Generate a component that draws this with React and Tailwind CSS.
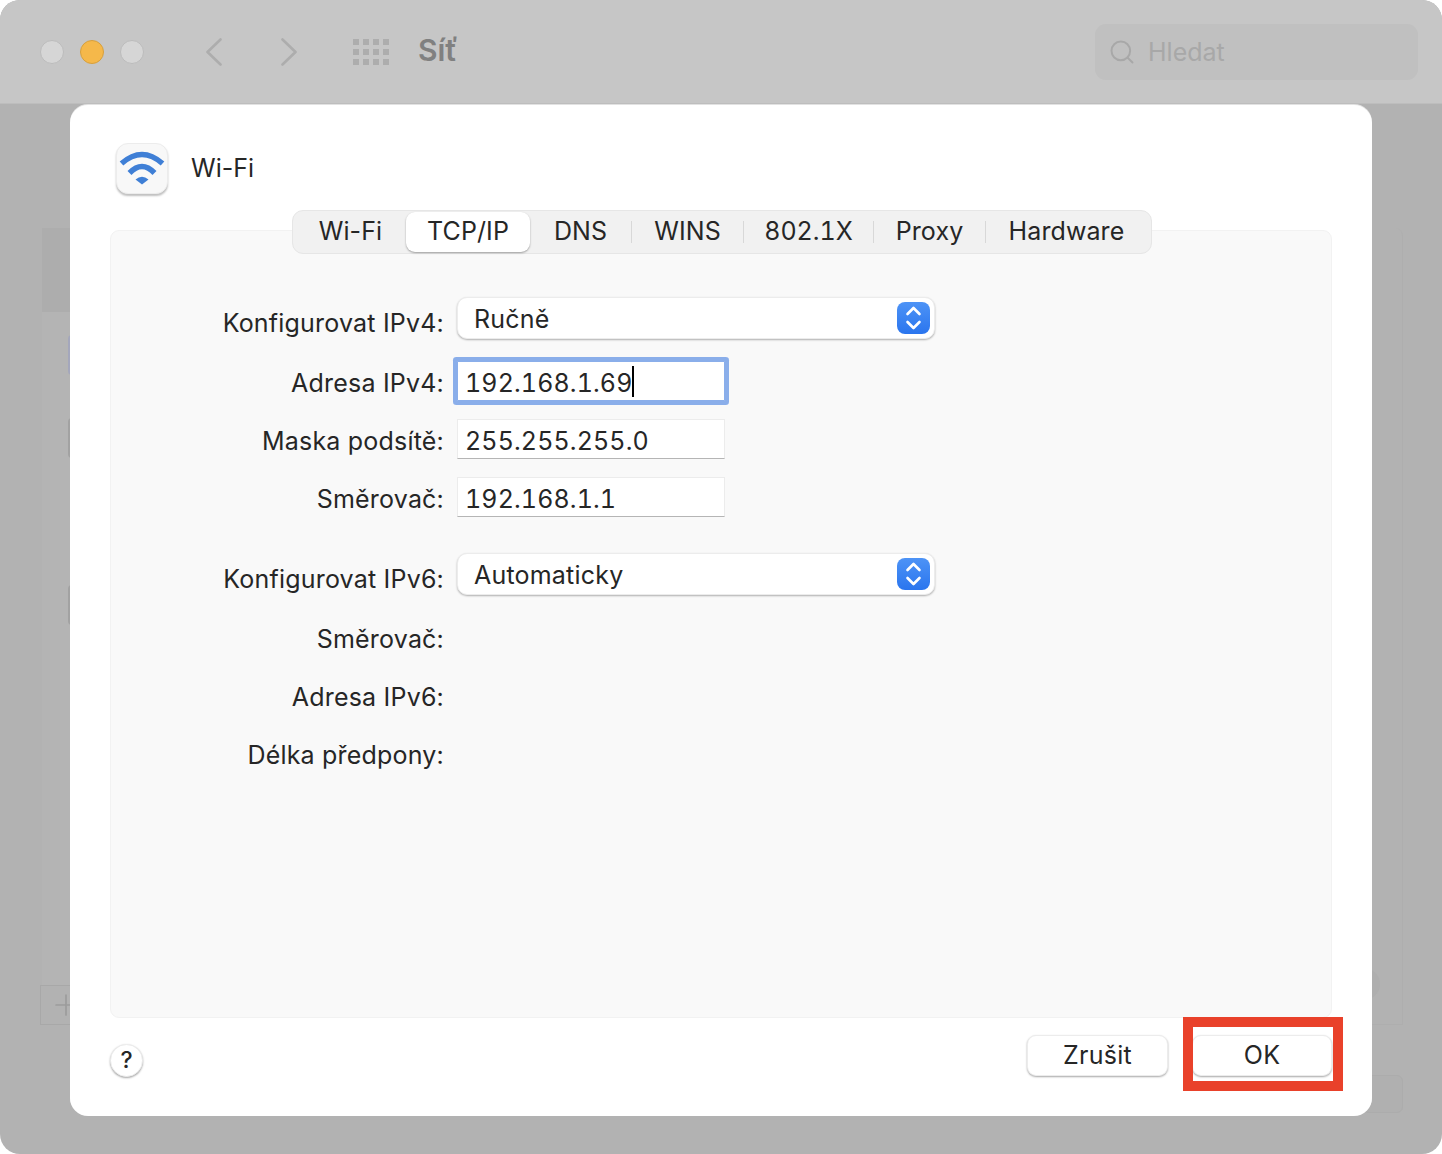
import React from 'react';
import { Search, Plus } from 'lucide-react';

const WifiIcon = () => (
  <div className="w-[52px] h-[51px] rounded-[12px] bg-[#f8f8f8] border border-[#ececec] shadow-[0_2px_2px_rgba(0,0,0,0.25)]">
    <svg width="50" height="49" viewBox="1 1 50 49">
      <path d="M5.5 20.5 Q26 2.5 46.5 20.5" fill="none" stroke="#3f7fd6" strokeWidth="5.5" />
      <path d="M13.5 30 Q26 17 38.5 30" fill="none" stroke="#3f7fd6" strokeWidth="5.5" />
      <path d="M19.5 36.5 Q26 31 32.5 36.5 L26 41.5 Z" fill="#3f7fd6" />
    </svg>
  </div>
);

const Stepper = () => (
  <div className="w-[33px] h-[32px] flex items-center justify-center rounded-[8px] bg-gradient-to-b from-[#4d93f6] to-[#2a75ee]">
    <svg width="17" height="26" viewBox="0 0 17 26" fill="none" stroke="white" strokeWidth="2.6" strokeLinecap="round" strokeLinejoin="round">
      <path d="M2.5 9 L8.5 3 L14.5 9" />
      <path d="M2.5 17 L8.5 23 L14.5 17" />
    </svg>
  </div>
);

const Tabs = () => (
  <div className="relative z-10 ml-[182px] w-[860px] h-[44px] flex items-center bg-[#f1f1f1] border border-[#e6e6e6] rounded-[11px] text-[25px] tracking-[0.1px] text-[#262626]">
    <div className="w-[113px] pl-[2px] text-center">Wi-Fi</div>
    <div className="w-[124px] h-[40px] flex items-center justify-center bg-white rounded-[9px] shadow-[0_1px_2px_rgba(0,0,0,0.35)]">TCP/IP</div>
    <div className="w-[101px] text-center">DNS</div>
    <div className="w-px h-[22px] bg-[#d8d8d8]" />
    <div className="w-[111px] text-center">WINS</div>
    <div className="w-px h-[22px] bg-[#d8d8d8]" />
    <div className="w-[129px] text-center tabular-nums tracking-normal">802.1X</div>
    <div className="w-px h-[22px] bg-[#d8d8d8]" />
    <div className="w-[111px] text-center">Proxy</div>
    <div className="w-px h-[22px] bg-[#d8d8d8]" />
    <div className="flex-1 pr-[4px] text-center">Hardware</div>
  </div>
);

const Label = ({ children, offset }) => (
  <div className={`w-[333px] shrink-0 text-right text-[25px] tracking-[0.2px] leading-[40px] text-[#262626] ${offset}`}>{children}</div>
);

const SelectRow = ({ label, value, className }) => (
  <div className={`flex gap-[13px] h-[42px] ${className}`}>
    <Label offset="pt-[6px]">{label}</Label>
    <div className="w-[478px] h-[42px] flex items-center justify-between pl-[16px] pr-[4px] bg-white rounded-[10px] border border-[#ececec] shadow-[0_1px_2px_rgba(0,0,0,0.3)] text-[25px] tracking-[0.2px] text-[#262626]">
      <span className="pt-[3px]">{value}</span>
      <Stepper />
    </div>
  </div>
);

const InputRow = ({ label, value, focused, className }) => (
  <div className={`flex gap-[13px] h-[40px] ${className}`}>
    <Label offset="pt-[2px]">{label}</Label>
    {focused ? (
      <div className="w-[268px] h-[40px] flex items-center pl-[7px] bg-white border border-[#8aaeea] rounded-[1px] ring-4 ring-[#8aaeea] text-[25px] tracking-[0.12px] tabular-nums text-[#262626]">
        <span className="pt-[6px]">{value}</span>
        <span className="w-[2px] h-[31px] bg-black" />
      </div>
    ) : (
      <div className="w-[268px] h-[40px] flex items-center pl-[7px] pt-[6px] bg-white border border-[#ececec] border-b-[#b5b5b5] text-[25px] tracking-[0.12px] tabular-nums text-[#262626]">
        {value}
      </div>
    )}
  </div>
);

const LabelRow = ({ label, className }) => (
  <div className={`flex h-[40px] ${className}`}>
    <Label offset="pt-[2px]">{label}</Label>
  </div>
);

const Button = ({ children, className }) => (
  <div className={`h-[41px] flex items-center justify-center bg-white rounded-[9px] border border-[#ececec] shadow-[0_1px_2px_rgba(0,0,0,0.35)] text-[25px] tracking-[0.3px] text-[#262626] ${className}`}>
    {children}
  </div>
);

export default function App() {
  return (
    <div className="relative w-[1442px] h-[1154px] overflow-hidden bg-white font-['Inter',sans-serif]">
      <div className="flex flex-col h-full rounded-[20px] overflow-hidden bg-[#b2b2b2]">
        {/* title bar */}
        <div className="h-[104px] shrink-0 flex items-center pl-[40px] pr-[24px] bg-[#c6c6c6] border-b border-[#bdbdbd]">
          <div className="flex gap-[16px]">
            <div className="w-[24px] h-[24px] rounded-full bg-[#d6d6d6] border border-[#bcbcbc]" />
            <div className="w-[24px] h-[24px] rounded-full bg-[#f5b84a] border border-[#d6a03e]" />
            <div className="w-[24px] h-[24px] rounded-full bg-[#d6d6d6] border border-[#bcbcbc]" />
          </div>
          <svg width="16" height="28" viewBox="0 0 16 28" fill="none" stroke="#adadad" strokeWidth="2.6" strokeLinecap="round" strokeLinejoin="round" className="ml-[62px]">
            <path d="M14.5 1.5 L1.5 14 L14.5 26.5" />
          </svg>
          <svg width="16" height="28" viewBox="0 0 16 28" fill="none" stroke="#adadad" strokeWidth="2.6" strokeLinecap="round" strokeLinejoin="round" className="ml-[59px]">
            <path d="M1.5 1.5 L14.5 14 L1.5 26.5" />
          </svg>
          <div className="ml-[56px] grid grid-cols-4 gap-x-[4px] gap-y-[4px]">
            {Array.from({ length: 12 }).map((_, i) => (
              <div key={i} className="w-[6px] h-[6px] bg-[#adadad]" />
            ))}
          </div>
          <div className="ml-[29px] pb-[2px] text-[30px] font-semibold text-[#808080]">Síť</div>
          <div className="ml-auto w-[323px] h-[56px] flex items-center pl-[13px] gap-[12px] rounded-[11px] bg-[#c0c0c0] text-[25px] text-[#a8a8a8]">
            <Search size={28} strokeWidth={1.7} />
            <span className="pt-[3px]">Hledat</span>
          </div>
        </div>

        {/* what shows of the window behind the sheet */}
        <div className="flex-1 flex justify-between pl-[40px] pr-[39px] pt-[124px] pb-[41px]">
          <div className="w-[300px] flex flex-col">
            <div className="ml-[2px] h-[84px] bg-[#adadad]" />
            <div className="ml-[2px] flex-1 flex flex-col pl-[26px] bg-[#b4b4b4]">
              <div className="mt-[23px] w-[20px] h-[40px] rounded-[4px] bg-[#a4a7bc]" />
              <div className="mt-[43px] w-[20px] h-[40px] rounded-[4px] bg-[#a2a2a2]" />
              <div className="mt-[127px] w-[20px] h-[40px] rounded-[4px] bg-[#a2a2a2]" />
            </div>
            <div className="h-[40px] w-[60px] flex items-center pl-[8px] border border-[#a8a8a8] text-[#9c9c9c]">
              <Plus size={34} strokeWidth={1.2} />
            </div>
            <div className="h-[88px]" />
          </div>
          <div className="w-[300px] flex flex-col">
            <div className="flex-1 flex items-end justify-end pr-[22px] pb-[24px] border-r border-b border-[#aeaeae] rounded-tr-[8px]">
              <div className="w-[32px] h-[32px] rounded-full bg-[#aeaeae]" />
            </div>
            <div className="mt-[50px] w-[40px] h-[38px] self-end rounded-[6px] bg-[#b0b0b0] border border-[#acacac]" />
          </div>
        </div>
      </div>

      {/* sheet */}
      <div className="absolute left-[70px] top-[105px] w-[1302px] h-[1011px] flex flex-col bg-white rounded-[18px] shadow-[0_-1px_0_#e2e2e2] pl-[40px] pr-[40px]">
        <div className="flex items-center gap-[23px] pl-[6px] mt-[38px]">
          <WifiIcon />
          <span className="pt-[1px] text-[25px] text-[#262626]">Wi-Fi</span>
        </div>
        <div className="mt-[16px]">
          <Tabs />
        </div>
        <div className="-mt-[24px] w-[1222px] h-[788px] pt-[66px] bg-[#f9f9f9] border border-[#f2f2f2] rounded-[9px]">
          <SelectRow label="Konfigurovat IPv4:" value="Ručně" />
          <InputRow label="Adresa IPv4:" value="192.168.1.69" focused className="mt-[22px]" />
          <InputRow label="Maska podsítě:" value="255.255.255.0" className="mt-[18px]" />
          <InputRow label="Směrovač:" value="192.168.1.1" className="mt-[18px]" />
          <SelectRow label="Konfigurovat IPv6:" value="Automaticky" className="mt-[36px]" />
          <LabelRow label="Směrovač:" className="mt-[22px]" />
          <LabelRow label="Adresa IPv6:" className="mt-[18px]" />
          <LabelRow label="Délka předpony:" className="mt-[18px]" />
        </div>
        <div className="flex items-start mt-[17px]">
          <div className="mt-[9px] w-[33px] h-[33px] flex items-center justify-center rounded-full bg-white border border-[#ececec] shadow-[0_1px_2px_rgba(0,0,0,0.35)] text-[23px] font-medium text-[#262626]">?</div>
          <Button className="ml-auto w-[141px]">Zrušit</Button>
          <Button className="ml-[24px] w-[140px]">OK</Button>
        </div>
      </div>

      {/* red annotation round the OK button */}
      <div className="absolute left-[1183px] top-[1017px] w-[160px] h-[74px] border-[10px] border-[#e9412a]" />
    </div>
  );
}
